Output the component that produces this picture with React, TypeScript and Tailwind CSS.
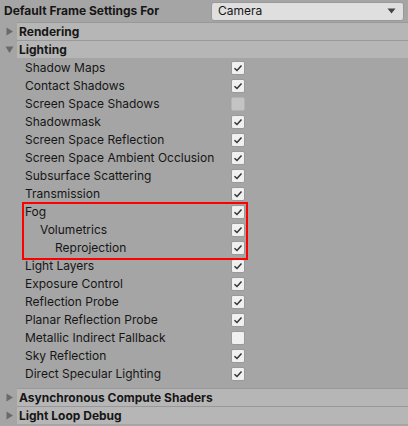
import React from "react";

const rows: { label: string; checked: boolean; disabled?: boolean; indent?: number }[] = [
  { label: "Shadow Maps", checked: true },
  { label: "Contact Shadows", checked: true },
  { label: "Screen Space Shadows", checked: false, disabled: true },
  { label: "Shadowmask", checked: true },
  { label: "Screen Space Reflection", checked: true },
  { label: "Screen Space Ambient Occlusion", checked: true },
  { label: "Subsurface Scattering", checked: true },
  { label: "Transmission", checked: true },
];
const fogRows = [
  { label: "Fog", indent: 0 },
  { label: "Volumetrics", indent: 1 },
  { label: "Reprojection", indent: 2 },
];
const rows2: { label: string; checked: boolean }[] = [
  { label: "Light Layers", checked: true },
  { label: "Exposure Control", checked: true },
  { label: "Reflection Probe", checked: true },
  { label: "Planar Reflection Probe", checked: true },
  { label: "Metallic Indirect Fallback", checked: false },
  { label: "Sky Reflection", checked: true },
  { label: "Direct Specular Lighting", checked: true },
];

function Check({ checked, disabled }: { checked: boolean; disabled?: boolean }) {
  if (disabled) {
    return <div className="w-[14px] h-[14px] rounded-[2px] bg-[#c4c4c4] border border-[#b4b4b4]" />;
  }
  return (
    <div className="w-[14px] h-[14px] rounded-[2px] bg-[#f0f0f0] border border-[#999999] flex items-center justify-center">
      {checked && (
        <svg width="10" height="10" viewBox="0 0 10 10">
          <path d="M1.5 5.2 L4 7.5 L8.5 2.5" fill="none" stroke="#333" strokeWidth="1.5" />
        </svg>
      )}
    </div>
  );
}

function Row({ label, checked, disabled, indent = 0 }: { label: string; checked: boolean; disabled?: boolean; indent?: number }) {
  return (
    <div className="h-[18px] flex items-center">
      <div className="w-[231px] whitespace-nowrap overflow-hidden" style={{ paddingLeft: 25 + indent * 15 }}>
        {label}
      </div>
      <Check checked={checked} disabled={disabled} />
    </div>
  );
}

function Header({ label, open }: { label: string; open?: boolean }) {
  return (
    <div className="h-[18px] flex items-center">
      <div className="w-[17px] flex justify-center pl-[2px]">
        {open ? (
          <svg width="9" height="9" viewBox="0 0 9 9">
            <path d="M0.5 1.5 L8.5 1.5 L4.5 8 Z" fill="#6a6a6a" />
          </svg>
        ) : (
          <svg width="9" height="9" viewBox="0 0 9 9">
            <path d="M1.5 0.5 L8 4.5 L1.5 8.5 Z" fill="#6a6a6a" />
          </svg>
        )}
      </div>
      <div className="flex-1 h-full bg-[#b6b6b6] border-t border-[#999999] font-bold pl-[2px] flex items-center">
        {label}
      </div>
    </div>
  );
}

export default function App() {
  return (
    <div
      className="w-[408px] h-[426px] bg-[#a5a5a5] text-[#161616] text-[12px] overflow-hidden"
      style={{ fontFamily: "Inter, 'Liberation Sans', sans-serif" }}
    >
      <div className="h-[22px] flex items-center">
        <div className="w-[211px] pl-[4px] font-bold">Default Frame Settings For</div>
        <div className="w-[193px] h-[19px] bg-[#dfdfdf] border border-[#999999] rounded-[3px] flex items-center justify-between pl-[6px] pr-[7px]">
          <span>Camera</span>
          <svg width="9" height="6" viewBox="0 0 9 6">
            <path d="M0.5 0.5 L8.5 0.5 L4.5 5.5 Z" fill="#444" />
          </svg>
        </div>
      </div>
      <Header label="Rendering" />
      <Header label="Lighting" open />
      <div className="pt-[1px]">
        {rows.map((r) => (
          <Row key={r.label} {...r} />
        ))}
        <div className="relative">
          <div className="absolute left-[22px] top-[-1px] w-[226px] h-[58px] border-2 border-[#ff0000] pointer-events-none" />
          {fogRows.map((r) => (
            <Row key={r.label} label={r.label} checked indent={r.indent} />
          ))}
        </div>
        {rows2.map((r) => (
          <Row key={r.label} {...r} />
        ))}
      </div>
      <div className="h-[5px]" />
      <Header label="Asynchronous Compute Shaders" />
      <Header label="Light Loop Debug" />
    </div>
  );
}
